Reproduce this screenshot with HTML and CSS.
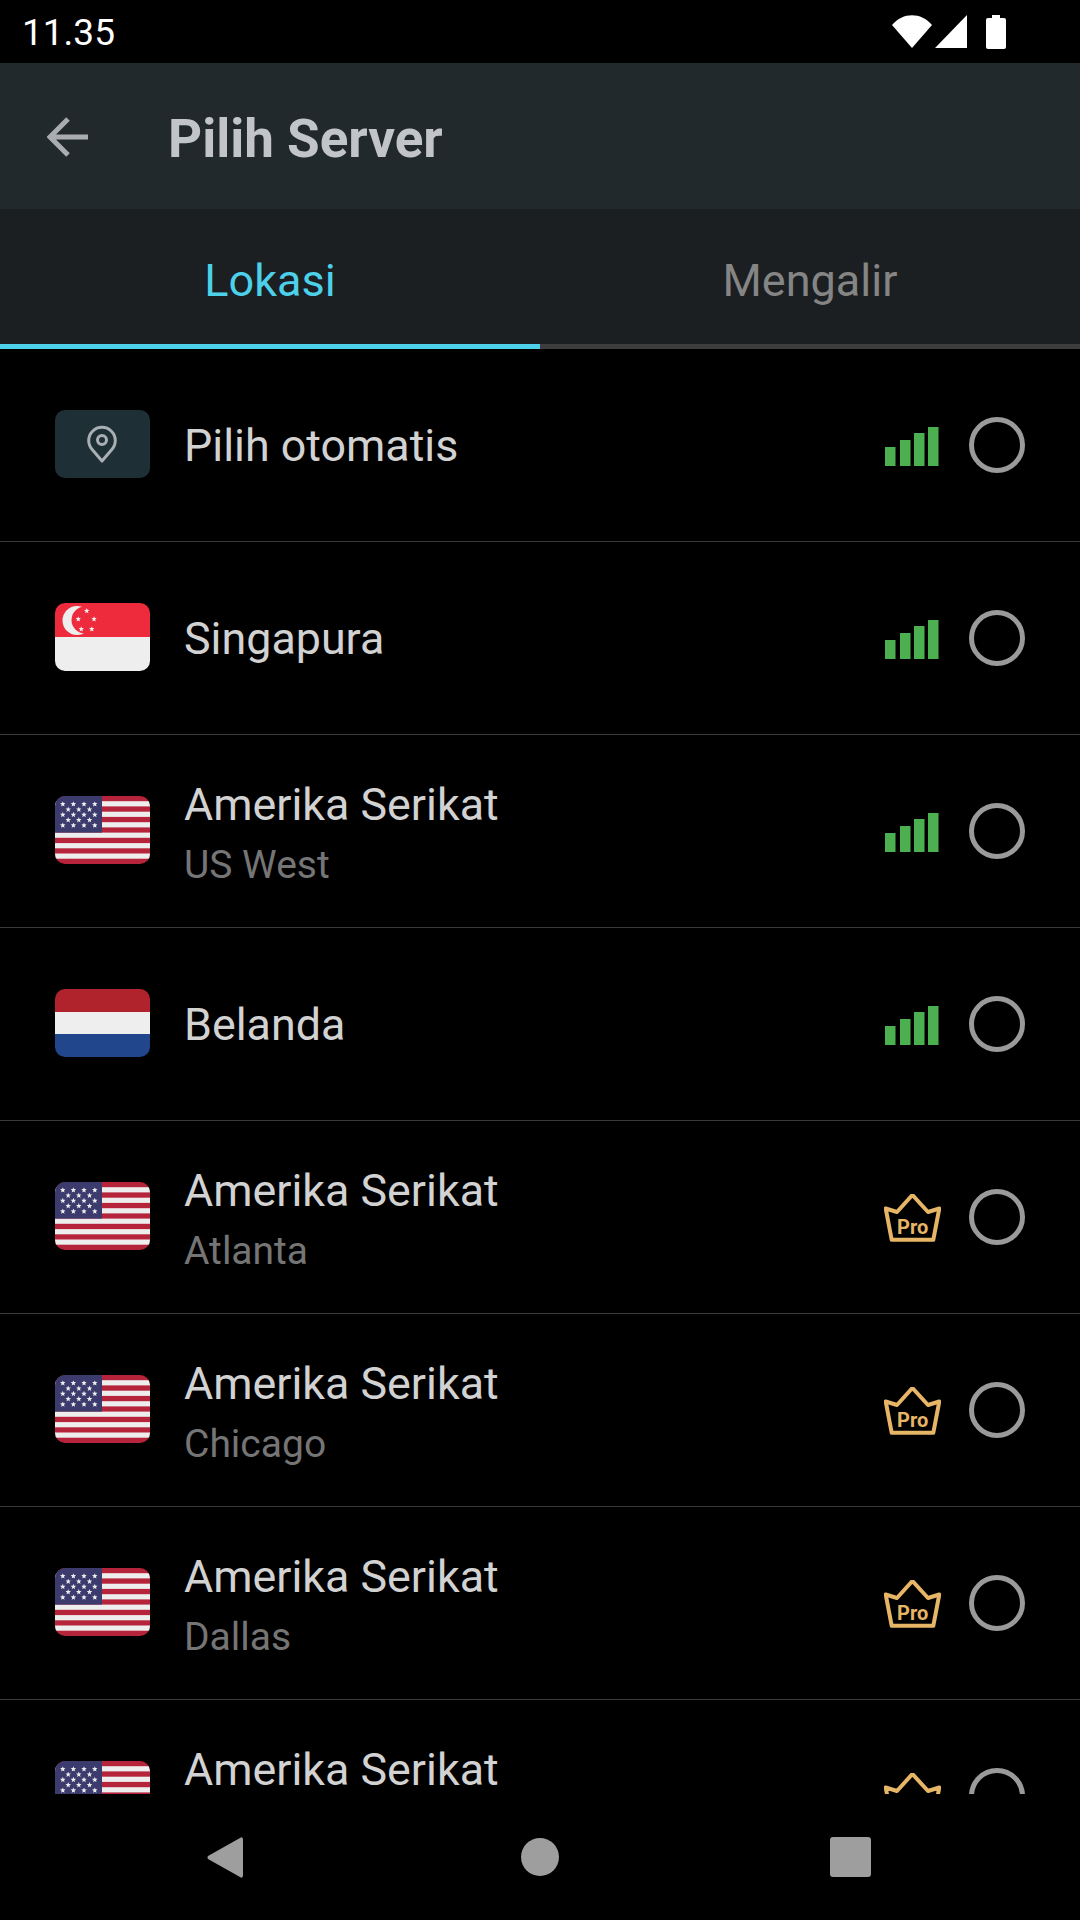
FILE: index.html
```html
<!DOCTYPE HTML>
<html>

<head>
  <meta charset="UTF-8">
  <title>Pilih Server</title>
  <link rel="stylesheet" href="styles.css">
</head>

<body>
  <!-- shared drawings -->
  <svg class="defs" width="0" height="0">
    <symbol id="star" viewBox="0 0 10 10">
      <polygon points="5,0 6.3,3.4 10,3.6 7.1,6 8.1,9.6 5,7.6 1.9,9.6 2.9,6 0,3.6 3.7,3.4"></polygon>
    </symbol>
    <symbol id="flag-us" viewBox="0 0 95 68">
      <rect width="95" height="68" fill="#b5243a"></rect>
      <g fill="#eeeeee">
        <rect y="5.2" width="95" height="5.2"></rect>
        <rect y="15.7" width="95" height="5.2"></rect>
        <rect y="26.2" width="95" height="5.2"></rect>
        <rect y="36.6" width="95" height="5.2"></rect>
        <rect y="47.1" width="95" height="5.2"></rect>
        <rect y="57.5" width="95" height="5.2"></rect>
      </g>
      <rect width="47" height="36.6" fill="#3c3b6e"></rect>
      <g fill="#eeeeee">
        <use href="#star" x="5" y="5.2" width="5.6" height="5.6"></use>
        <use href="#star" x="15.6" y="5.2" width="5.6" height="5.6"></use>
        <use href="#star" x="26.2" y="5.2" width="5.6" height="5.6"></use>
        <use href="#star" x="37" y="5.2" width="5.6" height="5.6"></use>
        <use href="#star" x="10.4" y="10.5" width="5.6" height="5.6"></use>
        <use href="#star" x="21" y="10.5" width="5.6" height="5.6"></use>
        <use href="#star" x="31.7" y="10.5" width="5.6" height="5.6"></use>
        <use href="#star" x="5" y="15.8" width="5.6" height="5.6"></use>
        <use href="#star" x="15.6" y="15.8" width="5.6" height="5.6"></use>
        <use href="#star" x="26.2" y="15.8" width="5.6" height="5.6"></use>
        <use href="#star" x="37" y="15.8" width="5.6" height="5.6"></use>
        <use href="#star" x="10.4" y="21.1" width="5.6" height="5.6"></use>
        <use href="#star" x="21" y="21.1" width="5.6" height="5.6"></use>
        <use href="#star" x="31.7" y="21.1" width="5.6" height="5.6"></use>
        <use href="#star" x="5" y="26.4" width="5.6" height="5.6"></use>
        <use href="#star" x="15.6" y="26.4" width="5.6" height="5.6"></use>
        <use href="#star" x="26.2" y="26.4" width="5.6" height="5.6"></use>
        <use href="#star" x="37" y="26.4" width="5.6" height="5.6"></use>
      </g>
    </symbol>
    <symbol id="signal" viewBox="0 -0.5 57 40">
      <g fill="#4caf50">
        <rect x="1" y="20" width="10.5" height="19"></rect>
        <rect x="16" y="13" width="10.5" height="26"></rect>
        <rect x="30" y="6" width="10.5" height="33"></rect>
        <rect x="44" y="0" width="10.5" height="39"></rect>
      </g>
    </symbol>
    <symbol id="crown" viewBox="0 1 57 49">
      <path d="M28.4 2 L44 19 L55.3 15.5 L49.3 46.8 L7.7 46.8 L1.7 15.5 L13 19 Z" fill="none" stroke="#e6b566" stroke-width="4" stroke-linejoin="round"></path>
    </symbol>
  </svg>

  <div class="phone">
    <div class="status-bar">
      <span class="time">11.35</span>
      <div class="status-icons">
        <svg width="40" height="33" viewBox="0 0 40 33">
          <path d="M0 10 C11 -3 29 -3 40 10 L20 33 Z" fill="#fff"></path>
        </svg>
        <svg class="cell" width="32" height="33" viewBox="0 0 32 33">
          <path d="M32 0 V33 H0 Z" fill="#fff"></path>
        </svg>
        <svg class="battery" width="20" height="34" viewBox="0 0 20 34">
          <path d="M6 0 H14 V3 H18 Q20 3 20 5 V32 Q20 34 18 34 H2 Q0 34 0 32 V5 Q0 3 2 3 H6 Z" fill="#fff"></path>
        </svg>
      </div>
    </div>

    <div class="toolbar">
      <svg class="back" width="42" height="42" viewBox="0 0 42 42">
        <path d="M41 21 H3 M21 3 L3 21 L21 39" fill="none" stroke="#a9adb0" stroke-width="5"></path>
      </svg>
      <h1 class="title">Pilih Server</h1>
    </div>

    <div class="tabs">
      <div class="tab active">Lokasi</div>
      <div class="tab">Mengalir</div>
    </div>

    <div class="list">
      <div class="row">
        <div class="flag auto">
          <svg width="95" height="68" viewBox="0 0 95 68">
            <path d="M47 51 L37.600 40 A13.300 13.300 0 1 1 56.400 40 Z" fill="none" stroke="#a9b0b3" stroke-width="3" stroke-linejoin="round"></path>
            <circle cx="47" cy="30" r="4.500" fill="none" stroke="#a9b0b3" stroke-width="3"></circle>
          </svg>
        </div>
        <div class="names single"><div class="name">Pilih otomatis</div></div>
        <svg class="level"><use href="#signal"></use></svg>
        <div class="radio"></div>
      </div>

      <div class="row">
        <div class="flag">
          <svg width="95" height="68" viewBox="0 0 95 68">
            <rect width="95" height="34" fill="#ee2b3c"></rect>
            <rect y="34" width="95" height="34" fill="#eeeeee"></rect>
            <circle cx="22" cy="17.500" r="14.500" fill="#eeeeee"></circle>
            <circle cx="30" cy="17" r="13.500" fill="#ee2b3c"></circle>
            <g fill="#eeeeee">
              <use href="#star" x="29" y="5" width="5.500" height="5.500"></use>
              <use href="#star" x="20.500" y="13.200" width="5.500" height="5.500"></use>
              <use href="#star" x="36.300" y="13.200" width="5.500" height="5.500"></use>
              <use href="#star" x="23.500" y="23.200" width="5.500" height="5.500"></use>
              <use href="#star" x="34" y="23.200" width="5.500" height="5.500"></use>
            </g>
          </svg>
        </div>
        <div class="names single"><div class="name">Singapura</div></div>
        <svg class="level"><use href="#signal"></use></svg>
        <div class="radio"></div>
      </div>

      <div class="row">
        <svg class="flag"><use href="#flag-us"></use></svg>
        <div class="names"><div class="name">Amerika Serikat</div><div class="city">US West</div></div>
        <svg class="level"><use href="#signal"></use></svg>
        <div class="radio"></div>
      </div>

      <div class="row">
        <div class="flag">
          <svg width="95" height="68" viewBox="0 0 95 68">
            <rect width="95" height="23" fill="#b0222c"></rect>
            <rect y="23" width="95" height="22" fill="#eeeeee"></rect>
            <rect y="45" width="95" height="23" fill="#21468b"></rect>
          </svg>
        </div>
        <div class="names single"><div class="name">Belanda</div></div>
        <svg class="level"><use href="#signal"></use></svg>
        <div class="radio"></div>
      </div>

      <div class="row">
        <svg class="flag"><use href="#flag-us"></use></svg>
        <div class="names"><div class="name">Amerika Serikat</div><div class="city">Atlanta</div></div>
        <svg class="level"><use href="#crown"></use><text x="28.600" y="39.500" text-anchor="middle" class="pro">Pro</text></svg>
        <div class="radio"></div>
      </div>

      <div class="row">
        <svg class="flag"><use href="#flag-us"></use></svg>
        <div class="names"><div class="name">Amerika Serikat</div><div class="city">Chicago</div></div>
        <svg class="level"><use href="#crown"></use><text x="28.600" y="39.500" text-anchor="middle" class="pro">Pro</text></svg>
        <div class="radio"></div>
      </div>

      <div class="row">
        <svg class="flag"><use href="#flag-us"></use></svg>
        <div class="names"><div class="name">Amerika Serikat</div><div class="city">Dallas</div></div>
        <svg class="level"><use href="#crown"></use><text x="28.600" y="39.500" text-anchor="middle" class="pro">Pro</text></svg>
        <div class="radio"></div>
      </div>

      <!-- last row runs under the nav bar, its second line is out of view -->
      <div class="row">
        <svg class="flag"><use href="#flag-us"></use></svg>
        <div class="names"><div class="name">Amerika Serikat</div><div class="city">&nbsp;</div></div>
        <svg class="level"><use href="#crown"></use></svg>
        <div class="radio"></div>
      </div>
    </div>

    <div class="nav-bar">
      <svg width="36" height="41" viewBox="0 0 36 41">
        <path d="M33 1 Q36 -1 36 3 V38 Q36 42 33 40 L1 22 Q0 20.500 1 19 Z" fill="#9e9e9e"></path>
      </svg>
      <div class="home"></div>
      <div class="recent"></div>
    </div>
  </div>
</body>

</html>
```

FILE: styles.css
```css
html, body {
  margin: 0;
  padding: 0;
  background: #000;
}

.defs {
  display: block;
  height: 0;
}

.phone {
  width: 1080px;
  height: 1920px;
  display: flex;
  flex-direction: column;
  overflow: hidden;
  font-family: Roboto, "Liberation Sans", sans-serif;
  background: #000;
}

/* status bar */
.status-bar {
  height: 63px;
  flex: none;
  display: flex;
  align-items: center;
  justify-content: space-between;
  padding: 0 74px 0 22px;
  box-sizing: border-box;
}

.time {
  padding-top: 2px;
  color: #fff;
  font-size: 37px;
}

.status-icons {
  display: flex;
  align-items: flex-start;
}

.cell {
  margin-left: 3px;
}

.battery {
  margin-left: 19px;
}

/* toolbar */
.toolbar {
  height: 146px;
  flex: none;
  display: flex;
  align-items: center;
  background: #22292d;
  padding-left: 47px;
  box-sizing: border-box;
}

.back {
  flex: none;
  margin-top: 2px;
}

.title {
  margin: 0 0 0 79px;
  padding-top: 5px;
  color: #c1c5c8;
  font-size: 53px;
  font-weight: 700;
}

/* tabs */
.tabs {
  height: 140px;
  flex: none;
  display: flex;
  background: #1b1f22;
}

.tab {
  flex: 1;
  display: flex;
  align-items: center;
  justify-content: center;
  padding-top: 7px;
  border-bottom: 5px solid #3d3d3d;
  box-sizing: border-box;
  color: #858585;
  font-size: 45px;
}

.tab.active {
  color: #4dd0e9;
  border-bottom-color: #4dd0e9;
}

/* server list */
.list {
  flex: 1;
  min-height: 0;
  overflow: hidden;
}

.row {
  height: 193px;
  display: flex;
  align-items: center;
  padding: 0 55px;
  border-bottom: 1px solid #3a3a3a;
  box-sizing: border-box;
}

.flag {
  flex: none;
  width: 95px;
  height: 68px;
  margin: 0 34px 2px 0;
  border-radius: 10px;
  overflow: hidden;
}

.flag svg {
  display: block;
}

.auto {
  background: #1f2f36;
}

.names {
  flex: 1;
  padding-top: 7px;
}

.names.single {
  padding-top: 2px;
}

.name {
  color: #d2d2d2;
  font-size: 44.8px;
  line-height: 60px;
}

.city {
  color: #757575;
  font-size: 39px;
  line-height: 60px;
}

.level {
  flex: none;
  width: 57px;
  height: 49px;
  margin: 3px 28px 0 0;
}

.pro {
  font-size: 20px;
  font-weight: 700;
  fill: #e6b566;
}

.radio {
  flex: none;
  width: 56px;
  height: 56px;
  border: 5px solid #9a9a9a;
  border-radius: 50%;
  box-sizing: border-box;
}

/* navigation bar */
.nav-bar {
  height: 126px;
  flex: none;
  display: flex;
  align-items: center;
  padding-left: 207px;
  background: #000;
}

.home {
  width: 38px;
  height: 38px;
  margin-left: 278px;
  border-radius: 50%;
  background: #9e9e9e;
}

.recent {
  width: 41px;
  height: 40px;
  margin-left: 271px;
  border-radius: 3px;
  background: #9e9e9e;
}
```
